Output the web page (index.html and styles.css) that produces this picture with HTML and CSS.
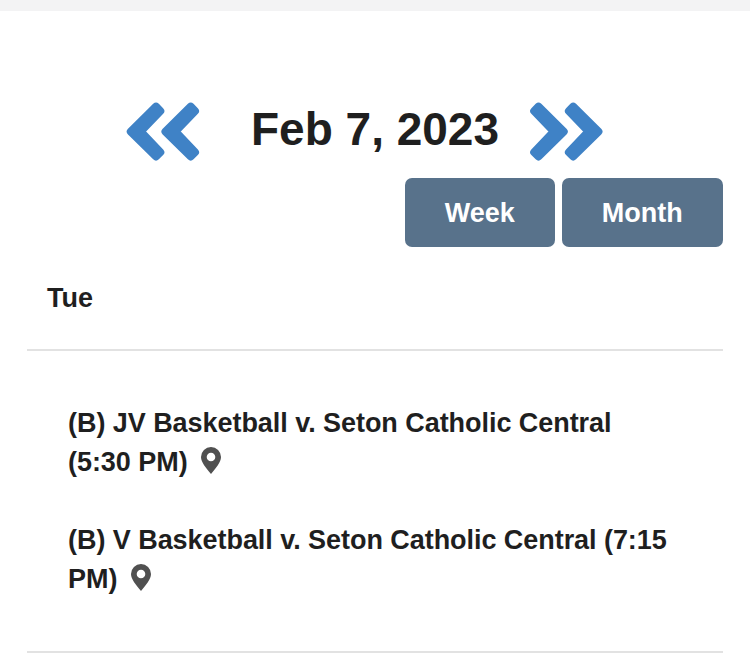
FILE: index.html
```html
<!DOCTYPE html>
<html lang="en">

<head>
  <meta charset="UTF-8" />
  <meta name="viewport" content="width=device-width, initial-scale=1.0" />
  <title>Calendar - Feb 7, 2023</title>
  <link rel="stylesheet" href="styles.css">
</head>

<body>
  <main class="calendar">
    <header class="date-nav">
      <a class="arrow" href="#" aria-label="Previous day">
        <svg viewBox="0 0 74 59">
          <path d="M4.8 29.6 L30 4.7 L34.3 9 L14.6 29.6 L34.3 50.2 L30 54.5 Z" />
          <path d="M39.5 29.6 L64.7 4.7 L69 9 L49.3 29.6 L69 50.2 L64.7 54.5 Z" />
        </svg>
      </a>
      <h1>Feb 7, 2023</h1>
      <a class="arrow" href="#" aria-label="Next day">
        <svg viewBox="0 0 74 59">
          <path d="M34.7 29.6 L9.5 4.7 L5.2 9 L24.9 29.6 L5.2 50.2 L9.5 54.5 Z" />
          <path d="M69.4 29.6 L44.2 4.7 L39.9 9 L59.6 29.6 L39.9 50.2 L44.2 54.5 Z" />
        </svg>
      </a>
    </header>

    <div class="views">
      <button class="button">Week</button>
      <button class="button month">Month</button>
    </div>

    <h2 class="day">Tue</h2>

    <ul class="events">
      <li>
        (B) JV Basketball v. Seton Catholic Central<br>
        (5:30 PM)
        <svg class="pin" viewBox="0 0 20 27">
          <path fill-rule="evenodd" d="M10 0 A10 10 0 0 0 0 10 C0 15 5 21 10 27 C15 21 20 15 20 10 A10 10 0 0 0 10 0 Z M10 5.7 A4.3 4.3 0 1 1 10 14.3 A4.3 4.3 0 1 1 10 5.7 Z" />
        </svg>
      </li>
      <li>
        (B) V Basketball v. Seton Catholic Central (7:15<br>
        PM)
        <svg class="pin" viewBox="0 0 20 27">
          <path fill-rule="evenodd" d="M10 0 A10 10 0 0 0 0 10 C0 15 5 21 10 27 C15 21 20 15 20 10 A10 10 0 0 0 10 0 Z M10 5.7 A4.3 4.3 0 1 1 10 14.3 A4.3 4.3 0 1 1 10 5.7 Z" />
        </svg>
      </li>
    </ul>
  </main>
</body>

</html>
```
FILE: styles.css
```css
* {
  box-sizing: border-box;
}

body {
  margin: 0;
  height: 660px;
  overflow: hidden;
  border-top: 11px solid #f3f3f4;
  background: #fff;
  color: #1f1f1f;
  font-family: "Liberation Sans", Arial, sans-serif;
  font-weight: bold;
}

.calendar {
  padding: 91px 27px 0;
}

.date-nav {
  display: flex;
  height: 59px;
  padding-left: 99px;
}

.arrow {
  width: 74px;
  height: 59px;
}

.arrow svg {
  display: block;
  fill: #3f82c6;
  stroke: #3f82c6;
  stroke-width: 8;
  stroke-linejoin: round;
}

h1 {
  width: 248px;
  margin: 0 30px 0 51px;
  font-size: 46px;
  line-height: 54px;
  white-space: nowrap;
}

.views {
  display: flex;
  justify-content: flex-end;
  gap: 6.5px;
  margin-top: 17px;
}

.button {
  width: 150.5px;
  height: 69px;
  padding: 2px 0 0;
  border: none;
  border-radius: 7px;
  background: #58728b;
  color: #fff;
  font: inherit;
  font-size: 27px;
}

.month {
  width: 161.5px;
}

.day {
  height: 104px;
  margin: 0;
  padding: 35px 20px 0;
  border-bottom: 2px solid #e2e2e2;
  font-size: 27px;
  line-height: 32px;
}

.events {
  height: 302px;
  margin: 0;
  padding: 53px 41px 0;
  border-bottom: 2px solid #e2e2e2;
  list-style: none;
  font-size: 27px;
  line-height: 39px;
  letter-spacing: -0.05px;
  white-space: nowrap;
}

.events li {
  height: 78px;
  margin-bottom: 39px;
}

.pin {
  width: 20px;
  height: 27px;
  margin-left: 6px;
  fill: #505050;
  vertical-align: -3px;
}
```
